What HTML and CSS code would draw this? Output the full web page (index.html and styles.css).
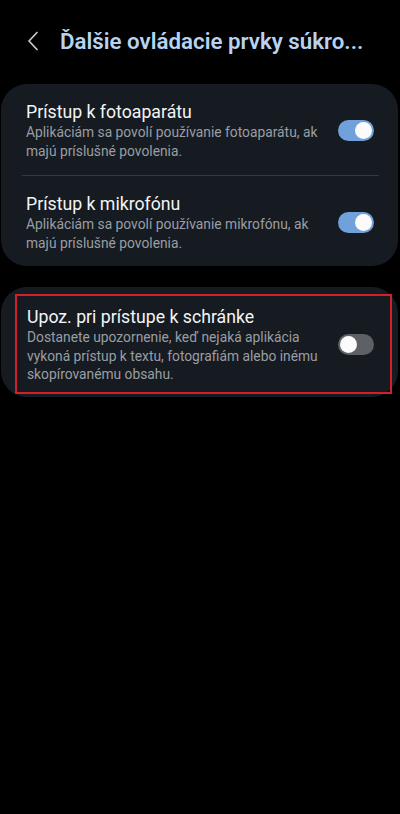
FILE: index.html
```html
<!DOCTYPE html>
<html lang="sk">
<head>
    <meta charset="UTF-8">
    <meta name="viewport" content="width=device-width, initial-scale=1.0">
    <title>Ďalšie ovládacie prvky súkromia</title>
    <link rel="stylesheet" href="styles.css">
</head>
<body>
    <!-- hlavička -->
    <div class="header">
        <svg class="back" width="12" height="20" viewBox="0 0 12 20">
            <polyline points="10,1.5 2,10 10,18.5" fill="none" stroke="#c9cbce" stroke-width="1.7" stroke-linecap="round" stroke-linejoin="round"/>
        </svg>
        <h1 class="title">Ďalšie ovládacie prvky súkro...</h1>
    </div>

    <!-- prvá karta -->
    <div class="card">
        <div class="row">
            <div class="text">
                <div class="rowTitle">Prístup k fotoaparátu</div>
                <div class="rowDesc">Aplikáciám sa povolí používanie fotoaparátu, ak majú príslušné povolenia.</div>
            </div>
            <span class="switch on"></span>
        </div>
        <div class="divider"></div>
        <div class="row">
            <div class="text">
                <div class="rowTitle">Prístup k mikrofónu</div>
                <div class="rowDesc">Aplikáciám sa povolí používanie mikrofónu, ak majú príslušné povolenia.</div>
            </div>
            <span class="switch on"></span>
        </div>
    </div>

    <!-- druhá karta -->
    <div class="card cardMarked">
        <div class="row marked">
            <div class="text">
                <div class="rowTitle">Upoz. pri prístupe k schránke</div>
                <div class="rowDesc">Dostanete upozornenie, keď nejaká aplikácia vykoná prístup k textu, fotografiám alebo inému skopírovanému obsahu.</div>
            </div>
            <span class="switch"></span>
        </div>
    </div>
</body>
</html>
```
FILE: styles.css
```css
body {
    margin: 0;
    background-color: #000;
    font-family: Roboto, "Noto Sans", sans-serif;
    color: #f1f2f3;
}
.header {
    display: flex;
    align-items: center;
    height: 84px;
    padding: 0 0 2px 27px;
    box-sizing: border-box;
}
.back {
    display: block;
    margin-right: 21px;
}
.title {
    margin: 0;
    font-size: 22.3px;
    font-weight: 600;
    color: #b7d3f2;
    white-space: nowrap;
}
.card {
    margin: 0 2px 21px 1px;
    background-color: #161b21;
    border-radius: 26px;
}
.row {
    display: flex;
    align-items: center;
    padding: 17px 24px 15px 25px;
}
.row + .divider + .row {
    padding-bottom: 14px;
}
.text {
    flex: 1;
    padding-right: 16px;
}
.rowTitle {
    font-size: 17.7px;
    line-height: 22px;
    color: #f3f4f5;
}
.rowDesc {
    font-size: 13.8px;
    line-height: 18.5px;
    color: #9a9ea4;
}
.divider {
    height: 1px;
    margin: 0 19px 0 21px;
    background-color: #343a41;
}
.cardMarked {
    padding: 7px 6px 3px 14px;
}
.marked {
    border: 2px solid #d11f2b;
    padding: 10px 16px 8px 10px;
}
.switch {
    position: relative;
    flex: none;
    width: 36px;
    height: 21px;
    border-radius: 11px;
    background-color: #5d6064;
}
.switch::after {
    content: "";
    position: absolute;
    top: 2px;
    left: 2px;
    width: 17px;
    height: 17px;
    border-radius: 50%;
    background-color: #fbfbfb;
}
.switch.on {
    background-color: #70a1db;
}
.switch.on::after {
    left: 17px;
}
```
